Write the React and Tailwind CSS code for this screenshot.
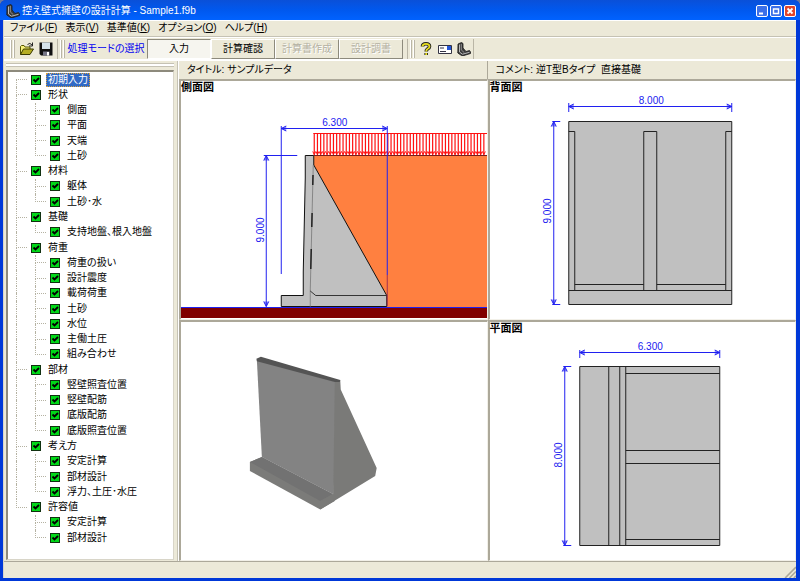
import React from "react";

const MENUS = [
  ["ファイル", "F"],
  ["表示", "V"],
  ["基準値", "K"],
  ["オプション", "O"],
  ["ヘルプ", "H"],
];

const TREE = [
  ["初期入力", []],
  ["形状", ["側面", "平面", "天端", "土砂"]],
  ["材料", ["躯体", "土砂･水"]],
  ["基礎", ["支持地盤、根入地盤"]],
  ["荷重", ["荷重の扱い", "設計震度", "載荷荷重", "土砂", "水位", "主働土圧", "組み合わせ"]],
  ["部材", ["竪壁照査位置", "竪壁配筋", "底版配筋", "底版照査位置"]],
  ["考え方", ["安定計算", "部材設計", "浮力、土圧･水圧"]],
  ["許容値", ["安定計算", "部材設計"]],
];

const ROWS = TREE.flatMap(([name, children], g) => [
  { name, level: 0, first: g === 0, last: g === TREE.length - 1 },
  ...children.map((child, i) => ({
    name: child,
    level: 1,
    last: i === children.length - 1,
    lastGroup: g === TREE.length - 1,
  })),
]);

const SVG_FONT = '"Liberation Sans", Arial, sans-serif';
const BLUE = "#2020f0";

function WallIcon({ className }) {
  return (
    <svg viewBox="0 0 14 14" className={className} aria-hidden="true">
      <path d="M1 2 4.500 .500 6 1.500V6l3 3.500 3.500-1L13.500 10v1.500L7 13.500H4.500L.800 11z" fill="#3c3c3c" stroke="#1a1a1a" strokeWidth=".8" />
      <path d="M2.500 2.500V10l3 2.200 7-1.900" fill="none" stroke="#b8b8b8" />
      <path d="M4.300 2V8l3 2.600" fill="none" stroke="#8c8c8c" />
    </svg>
  );
}

function TitleBar() {
  return (
    <header className="flex h-5 shrink-0 items-center gap-0.5 rounded-t-md bg-linear-to-b from-[#0a50d8] via-[#0058ee] to-[#0062ff] pt-px pr-1 pl-1.5">
      <WallIcon className="size-3.5" />
      <h1 className="flex-1 text-[10px] leading-3 whitespace-pre text-white">控え壁式擁壁の設計計算 - Sample1.f9b</h1>
      <div className="flex gap-0.5">
        <button aria-label="最小化" className="size-3 rounded-xs border border-white bg-[#3c70e8]">
          <svg viewBox="0 0 10 10" className="block"><path d="M2 7.500h4" stroke="#fff" strokeWidth="2" /></svg>
        </button>
        <button aria-label="最大化" className="size-3 rounded-xs border border-white bg-[#3c70e8]">
          <svg viewBox="0 0 10 10" className="block"><path d="M2.500 3h5v4.500h-5z" fill="none" stroke="#fff" strokeWidth="1.400" /></svg>
        </button>
        <button aria-label="閉じる" className="size-3 rounded-xs border border-white bg-[#e0452a]">
          <svg viewBox="0 0 10 10" className="block"><path d="m2.500 2.500 5 5m0-5-5 5" stroke="#fff" strokeWidth="1.800" /></svg>
        </button>
      </div>
    </header>
  );
}

function MenuBar() {
  return (
    <nav className="flex h-[17px] shrink-0 items-center gap-2 border-t border-b border-t-white border-b-[#c5c2b4] px-1.5 pb-0.5 text-[10px] leading-3">
      {MENUS.map(([name, key]) => (
        <button key={key} className="whitespace-nowrap">
          {name}(<u>{key}</u>)
        </button>
      ))}
    </nav>
  );
}

function Grip() {
  return (
    <span className="flex gap-px py-px" aria-hidden="true">
      <span className="w-0.5 border-r border-l border-r-[#bab6a6] border-l-white" />
      <span className="w-0.5 border-r border-l border-r-[#bab6a6] border-l-white" />
    </span>
  );
}

function ModeButton({ children, pressed, disabled }) {
  const look = pressed
    ? "border-t-[#8d8a7c] border-l-[#8d8a7c] border-r-white border-b-white bg-[#f6f5ef]"
    : "border-t-white border-l-white border-r-[#8d8a7c] border-b-[#8d8a7c]";
  return (
    <button
      disabled={disabled}
      aria-pressed={!!pressed}
      className={`w-16 border text-[10px] leading-3 whitespace-nowrap disabled:text-[#b4b1a2] disabled:[text-shadow:1px_1px_0_#fff] ${look}`}
    >
      {children}
    </button>
  );
}

function ToolBar() {
  return (
    <div className="flex h-6 shrink-0 border-t border-b-2 border-white pt-px">
      <div className="flex gap-1 border-r border-[#bab6a6] pr-1 pl-1.5">
        <Grip />
        <div className="flex gap-1">
          <button aria-label="開く">
            <svg viewBox="0 0 16 14" className="h-3.5 w-4">
              <path d="M1.500 12.500v-8l1-1H5l1 1.500h5v2" fill="#f5ef7a" stroke="#555500" />
              <path d="m1.500 12.500 3-5.500h10l-3.500 5.500z" fill="#b5ad22" stroke="#3a3a00" />
              <path d="M8.500 2.500Q11 0 13 3M13.500 .500V4H10" fill="none" stroke="#222" />
            </svg>
          </button>
          <button aria-label="保存">
            <svg viewBox="0 0 14 14" className="size-3.5">
              <path d="M.500 .500h13v13H2l-1.500-1.500z" fill="#111" />
              <path d="M3 .500h8v6.500H3z" fill="#d4e2ea" />
              <path d="M4 9.500h6.500V13.500H4z" fill="#778" />
              <path d="M8 10h2v3.500H8z" fill="#fff" />
            </svg>
          </button>
        </div>
      </div>
      <div className="flex items-stretch border-r border-[#bab6a6] pr-1 pl-0.5">
        <Grip />
        <span className="w-[82px] self-center text-center text-[10px] leading-3 whitespace-nowrap text-[#0000f0]">処理モードの選択</span>
        <ModeButton pressed>入力</ModeButton>
        <ModeButton>計算確認</ModeButton>
        <ModeButton disabled>計算書作成</ModeButton>
        <ModeButton disabled>設計調書</ModeButton>
      </div>
      <div className="flex gap-1 border-r border-[#bab6a6] pr-0.5 pl-0.5">
        <Grip />
        <button aria-label="ヘルプ">
          <svg viewBox="0 0 14 14" className="size-3.5">
            <path d="M3.500 4.500Q3.500 1.800 7 1.800t3.500 2.700Q10.500 6 8.500 7 7.200 7.800 7.200 9.500M7.200 11v2" fill="none" stroke="#222" strokeWidth="3.600" />
            <path d="M3.500 4.500Q3.500 1.800 7 1.800t3.500 2.700Q10.500 6 8.500 7 7.200 7.800 7.200 9.500M7.200 11v2" fill="none" stroke="#e6dc1e" strokeWidth="1.800" />
          </svg>
        </button>
        <button aria-label="メール">
          <svg viewBox="0 0 16 14" className="h-3.5 w-4">
            <path d="M1.500 3.500h13v8h-13z" fill="#fff" stroke="#334" />
            <path d="M3 6h4M3 9.500h6" stroke="#334" />
            <path d="M10 4h4v4h-4z" fill="#2456d8" />
          </svg>
        </button>
        <button aria-label="擁壁">
          <WallIcon className="size-3.5" />
        </button>
      </div>
    </div>
  );
}

function TreeRow({ row }) {
  const dots = "border-dotted border-[#b5b2a2]";
  const child = row.level === 1;
  const trunk = !(child && row.lastGroup);
  return (
    <li className="flex flex-1 items-stretch">
      <span className="flex w-[19px] flex-col pl-2">
        <span className={`flex-1 ${dots} ${trunk && !row.first ? "border-l" : ""} ${child ? "" : "border-b"}`} />
        <span className={`flex-1 ${dots} ${trunk && !row.last ? "border-l" : child && trunk ? "border-l" : ""}`} />
      </span>
      {child && (
        <span className="flex w-[19px] flex-col pl-2">
          <span className={`flex-1 border-b border-l ${dots}`} />
          <span className={`flex-1 ${dots} ${row.last ? "" : "border-l"}`} />
        </span>
      )}
      <label className="flex items-center gap-[5px] pl-1">
        <span className="grid size-2.5 shrink-0">
          <input type="checkbox" defaultChecked className="peer col-start-1 row-start-1 size-2.5 appearance-none border border-[#103010] bg-white checked:bg-[#00d818]" />
          <svg viewBox="0 0 10 10" className="pointer-events-none invisible col-start-1 row-start-1 size-2.5 peer-checked:visible">
            <path d="m2.500 4.500 2 2 3.500-3.500" fill="none" stroke="#000" strokeWidth="1.800" />
          </svg>
        </span>
        <span className={`border px-px text-[10px] leading-3 whitespace-nowrap ${row.first ? "border-dotted border-[#d8a040] bg-[#316ac5] text-white" : "border-transparent"}`}>
          {row.name}
        </span>
      </label>
    </li>
  );
}

function Sidebar() {
  return (
    <aside className="flex w-[174px] shrink-0 flex-col border-r border-[#c5c2b4] pt-0.5 pr-[3px] pb-px pl-0.5">
      <div className="mb-[3px] h-1 border-t border-b border-[#c5c2b4] bg-white" />
      <ul className="flex flex-1 flex-col border-t-2 border-r border-b border-l-2 border-t-[#8d8a7c] border-r-[#d8d5c8] border-b-[#d8d5c8] border-l-[#8d8a7c] bg-white pb-3.5">
        {ROWS.map((row, i) => (
          <TreeRow key={i} row={row} />
        ))}
      </ul>
    </aside>
  );
}

function Dimension({ x1, y1, x2, y2, text, tx, ty }) {
  const across = y1 === y2;
  const heads = across
    ? `M${x1 + 5} ${y1 - 2.5}L${x1} ${y1}L${x1 + 5} ${y1 + 2.5}M${x2 - 5} ${y2 - 2.5}L${x2} ${y2}L${x2 - 5} ${y2 + 2.5}`
    : `M${x1 - 2.5} ${y1 + 5}L${x1} ${y1}L${x1 + 2.5} ${y1 + 5}M${x2 - 2.5} ${y2 - 5}L${x2} ${y2}L${x2 + 2.5} ${y2 - 5}`;
  return (
    <g>
      <path d={heads} fill={BLUE} fillOpacity=".5" stroke={BLUE} />
      <path d={`M${x1} ${y1}L${x2} ${y2}`} stroke={BLUE} />
      <text
        x={tx}
        y={ty}
        textAnchor="middle"
        fontFamily={SVG_FONT}
        fontSize="10"
        fill={BLUE}
        transform={across ? undefined : `rotate(-90 ${tx} ${ty})`}
      >
        {text}
      </text>
    </g>
  );
}

function View({ title, viewBox, cover, children }) {
  return (
    <section className="grid min-h-0 min-w-0 border-t-2 border-r border-b border-l-2 border-t-[#aca899] border-r-[#f2f0e8] border-b-[#f2f0e8] border-l-[#aca899] bg-white">
      <svg viewBox={viewBox} preserveAspectRatio={cover ? "xMidYMid slice" : "xMidYMid meet"} className="col-start-1 row-start-1 size-full min-h-0">
        {children}
      </svg>
      {title && <h2 className="z-10 col-start-1 row-start-1 self-start text-[11px] leading-3 font-bold">{title}</h2>}
    </section>
  );
}

const LOADS = Array.from({ length: 54 }, (_, i) => 314.5 + i * 3.2);

function SideView() {
  return (
    <View title="側面図" viewBox="181 81 306 238" cover>
      <path d="M314 155H488V307H314z" fill="#ff8040" />
      <path d="M180 308H488V318H180z" fill="#800000" />
      <path d="M180 307.500H488" stroke={BLUE} />
      <path d="M305.500 155.500H314V165L387 295.500V306.500H281.500V295.500H303.500V272L305.500 178z" fill="#c0c0c0" stroke="#111" />
      <path d="M310.500 291V306.500" stroke="#888" />
      <path d="M313.500 165 310.500 291" stroke="#777" strokeWidth=".8" />
      <path d="M313.500 165 310.500 291" stroke="#222" strokeWidth="1.500" strokeDasharray="0 10 10 28 14 22 20 40" />
      <path d="M310.500 291 316 295.500H387" fill="none" stroke="#111" strokeWidth=".8" />
      <path d="M314 155.500H488" stroke="#702020" />
      <path d={"M313.500 133.500H488" + LOADS.map((x) => `M${x} 133.5V155`).join("")} fill="none" stroke="#ff1010" strokeWidth="1.200" />
      <path d={LOADS.map((x) => `M${x - 1.5} 151.5L${x} 154.5L${x + 1.5} 151.5`).join("")} fill="none" stroke="#ff1010" />
      <path d="M281.500 126V274M387.500 126V275M264 155.500H297.500" stroke={BLUE} />
      <path d="M387.500 275V306" stroke="#a03050" />
      <Dimension x1={281.5} y1={128.5} x2={387.5} y2={128.5} text="6.300" tx={335} ty={126} />
      <Dimension x1={266.5} y1={155.5} x2={266.5} y2={306.5} text="9.000" tx={264} ty={230} />
    </View>
  );
}

function RearView() {
  return (
    <View title="背面図" viewBox="490 81 305 238">
      <path d="M568.500 121.500H731.500V304.500H568.500z" fill="#c0c0c0" stroke="#222" />
      <path
        d="M568.500 131.500H574.500V290.500M643.500 290.500V131.500H656.500V290.500M725.500 290.500V131.500H731.500M568.500 290.500H731.500M574.500 284.500H643.500M656.500 284.500H725.500"
        fill="none"
        stroke="#222"
      />
      <path d="M568.500 103V112M731.500 103V112M552 121.500H560M552 304.500H560" stroke={BLUE} />
      <Dimension x1={568.5} y1={106.5} x2={731.5} y2={106.5} text="8.000" tx={651} ty={104} />
      <Dimension x1={553.5} y1={121.5} x2={553.5} y2={304.5} text="9.000" tx={551} ty={211} />
    </View>
  );
}

function SolidView() {
  return (
    <View viewBox="181 322 306 238">
      <path d="M250 462 262 457 333 494 335 501 320.500 509.500 250 471z" fill="#7b7b79" />
      <path d="M250 462 262 457 333 494 320.500 501z" fill="#727272" />
      <path d="M257 360 336 381.500 334 494.500 262 457z" fill="#838383" />
      <path d="M335 382 340.500 380 341 389.500 377 468 375.500 476 320.500 509.500V501L333.500 494z" fill="#7a7a78" />
      <path d="M256.500 358.500 261 356.500 340.500 380 340 382 335 382 257 361z" fill="#545454" />
    </View>
  );
}

function PlanView() {
  return (
    <View title="平面図" viewBox="490 322 305 238">
      <path d="M579.500 366.500H719.500V545.500H579.500z" fill="#c0c0c0" stroke="#222" />
      <path
        d="M608.500 366.500V545.500M619.500 366.500V545.500M625.500 366.500V545.500M625.500 373.500H719.500M625.500 450.500H719.500M625.500 463.500H719.500M625.500 539.500H719.500"
        stroke="#222"
      />
      <path d="M579.500 350V358M719.500 350V358M563 366.500H571M563 545.500H571" stroke={BLUE} />
      <Dimension x1={579.5} y1={352.5} x2={719.5} y2={352.5} text="6.300" tx={650} ty={350} />
      <Dimension x1={564.5} y1={366.5} x2={564.5} y2={545.5} text="8.000" tx={562} ty={455} />
    </View>
  );
}

export default function App() {
  return (
    <div className="bg-[#6b7aa0]">
      <div className="flex h-screen flex-col rounded-t-md bg-[#0038d8] font-['Liberation_Sans','Noto_Sans_CJK_JP',sans-serif] text-black [font-feature-settings:'palt']">
        <TitleBar />
        <div className="mr-1 mb-[3px] ml-[3px] flex min-h-0 flex-1 flex-col border-l border-[#d8d5c8] bg-[#ece9d8]">
          <MenuBar />
          <ToolBar />
          <div className="flex min-h-0 flex-1">
            <Sidebar />
            <main className="flex min-w-0 flex-1 flex-col border-l border-white">
              <div className="grid h-[18px] shrink-0 grid-cols-2 text-[10px] leading-3">
                <div className="flex items-center border-r border-[#aca899] px-2 whitespace-pre">タイトル: サンプルデータ</div>
                <div className="flex items-center px-2 whitespace-pre">コメント: 逆T型Bタイプ  直接基礎</div>
              </div>
              <div className="grid min-h-0 flex-1 grid-cols-2 grid-rows-2">
                <SideView />
                <RearView />
                <SolidView />
                <PlanView />
              </div>
            </main>
          </div>
          <footer className="flex h-[17px] shrink-0 items-end justify-end border-t border-[#aca899]">
            <svg viewBox="0 0 11 11" className="size-3" aria-hidden="true">
              <path d="M1 11 11 1M5 11 11 5M9 11 11 9" stroke="#aca899" strokeWidth="1.500" />
            </svg>
          </footer>
        </div>
      </div>
    </div>
  );
}
